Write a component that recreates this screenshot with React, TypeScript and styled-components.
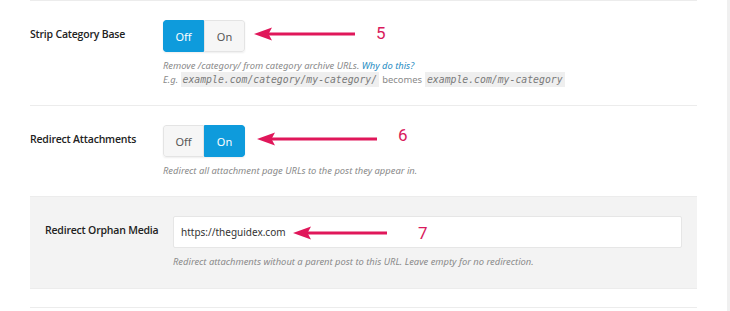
import styled, { createGlobalStyle } from "styled-components"

const GlobalStyle = createGlobalStyle`
  body {
    margin: 0;
    background: #fff;
    font-family: "Noto Sans", "Open Sans", sans-serif;
    color: #333;
  }
`

const Page = styled.div`
  display: flex;
  height: 311px;
  overflow: hidden;
`

const Content = styled.div`
  margin-left: 30px;
  width: 667px;
`

const ScrollStrip = styled.div`
  margin-left: auto;
  width: 3px;
  background: #f0f0f0;
`

const Row = styled.div<{ $first?: boolean }>`
  position: relative;
  display: grid;
  grid-template-columns: 133px 1fr;
  padding: 19px 0 18px;
  border-top: ${p => (p.$first ? "1px solid #ececec" : "none")};
  border-bottom: 1px solid #ececec;
`

const ShadedRow = styled(Row)`
  grid-template-columns: 128px 1fr;
  padding: 19px 15px 19px 15px;
  background: #f3f3f3;
`

const TailRow = styled.div`
  margin-top: 18px;
  border-top: 1px solid #ececec;
  height: 20px;
`

const Label = styled.div`
  padding-top: 4px;
  font-family: "Open Sans", "Noto Sans", sans-serif;
  font-size: 10.5px;
  font-weight: 600;
  letter-spacing: -0.2px;
  line-height: 20px;
  color: #222;
`

const Field = styled.div`
  display: flex;
  flex-direction: column;
  align-items: flex-start;
`

const Toggle = styled.div`
  display: inline-flex;
  border-radius: 3px;
  overflow: hidden;
  box-shadow: 0 1px 2px rgba(0, 0, 0, 0.07);
`

const Segment = styled.button<{ $active?: boolean }>`
  appearance: none;
  width: 41px;
  height: 32px;
  padding: 0;
  font-family: inherit;
  font-size: 11px;
  cursor: pointer;
  border: 1px solid ${p => (p.$active ? "#0e9bdc" : "#e4e4e4")};
  background: ${p => (p.$active ? "#0e9bdc" : "#f6f6f6")};
  color: ${p => (p.$active ? "#fff" : "#555")};

  &:first-child {
    border-radius: 3px 0 0 3px;
  }
  &:last-child {
    border-radius: 0 3px 3px 0;
  }
`

const Desc = styled.p`
  margin: 7px 0 0;
  font-size: 9.4px;
  font-style: italic;
  line-height: 14px;
  color: #8a8a8a;
`

const Link = styled.a`
  color: #1d8bc2;
  text-decoration: none;
`

const Plain = styled.span`
  font-style: normal;
  margin: 0 3px;
`

const Code = styled.code`
  font-family: "DejaVu Sans Mono", "Liberation Mono", monospace;
  font-size: 9.8px;
  font-style: italic;
  background: #efefef;
  color: #7a7a7a;
  padding: 2px 2px;
`

const UrlInput = styled.input`
  box-sizing: border-box;
  width: 509px;
  height: 32px;
  padding: 0 7px;
  border: 1px solid #e6e6e6;
  border-radius: 2px;
  background: #fff;
  font-family: inherit;
  font-size: 10px;
  color: #333;
  outline: none;
`

const Annotation = styled.div<{ $left: number; $top: number }>`
  position: absolute;
  left: ${p => p.$left}px;
  top: ${p => p.$top}px;
  display: flex;
  align-items: center;
  pointer-events: none;
`

const Number = styled.span<{ $gap: number; $lift: number }>`
  margin-left: ${p => p.$gap}px;
  margin-top: ${p => -p.$lift}px;
  font-family: Roboto, "Noto Sans", sans-serif;
  font-size: 17px;
  line-height: 14px;
  color: #d9195c;
`

const Arrow = ({ length }: { length: number }) => (
  <svg width={length} height={14} viewBox={`0 0 ${length} 14`}>
    <rect x={14} y={5.5} width={length - 14} height={3} fill="#e0175a" />
    <path d="M0 7 L18 0.5 L14.5 7 L18 13.5 Z" fill="#e0175a" />
  </svg>
)

export default function App() {
  return (
    <>
      <GlobalStyle />
      <Page>
        <Content>
          <Row $first>
            <Label>Strip Category Base</Label>
            <Field>
              <Toggle>
                <Segment $active>Off</Segment>
                <Segment>On</Segment>
              </Toggle>
              <Desc>
                Remove /category/ from category archive URLs. <Link href="#">Why do this?</Link>
                <br />
                E.g. <Code>example.com/category/my-category/</Code>
                <Plain>becomes</Plain>
                <Code>example.com/my-category</Code>
              </Desc>
            </Field>
            <Annotation $left={224} $top={26}>
              <Arrow length={101} />
              <Number $gap={21} $lift={2}>5</Number>
            </Annotation>
          </Row>

          <Row>
            <Label>Redirect Attachments</Label>
            <Field>
              <Toggle>
                <Segment>Off</Segment>
                <Segment $active>On</Segment>
              </Toggle>
              <Desc>Redirect all attachment page URLs to the post they appear in.</Desc>
            </Field>
            <Annotation $left={227} $top={26}>
              <Arrow length={120} />
              <Number $gap={21} $lift={8}>6</Number>
            </Annotation>
          </Row>

          <ShadedRow>
            <Label>Redirect Orphan Media</Label>
            <Field>
              <UrlInput defaultValue="https://theguidex.com" />
              <Desc>Redirect attachments without a parent post to this URL. Leave empty for no redirection.</Desc>
            </Field>
            <Annotation $left={263} $top={29}>
              <Arrow length={94} />
              <Number $gap={31} $lift={0}>7</Number>
            </Annotation>
          </ShadedRow>

          <TailRow />
        </Content>
        <ScrollStrip />
      </Page>
    </>
  )
}
